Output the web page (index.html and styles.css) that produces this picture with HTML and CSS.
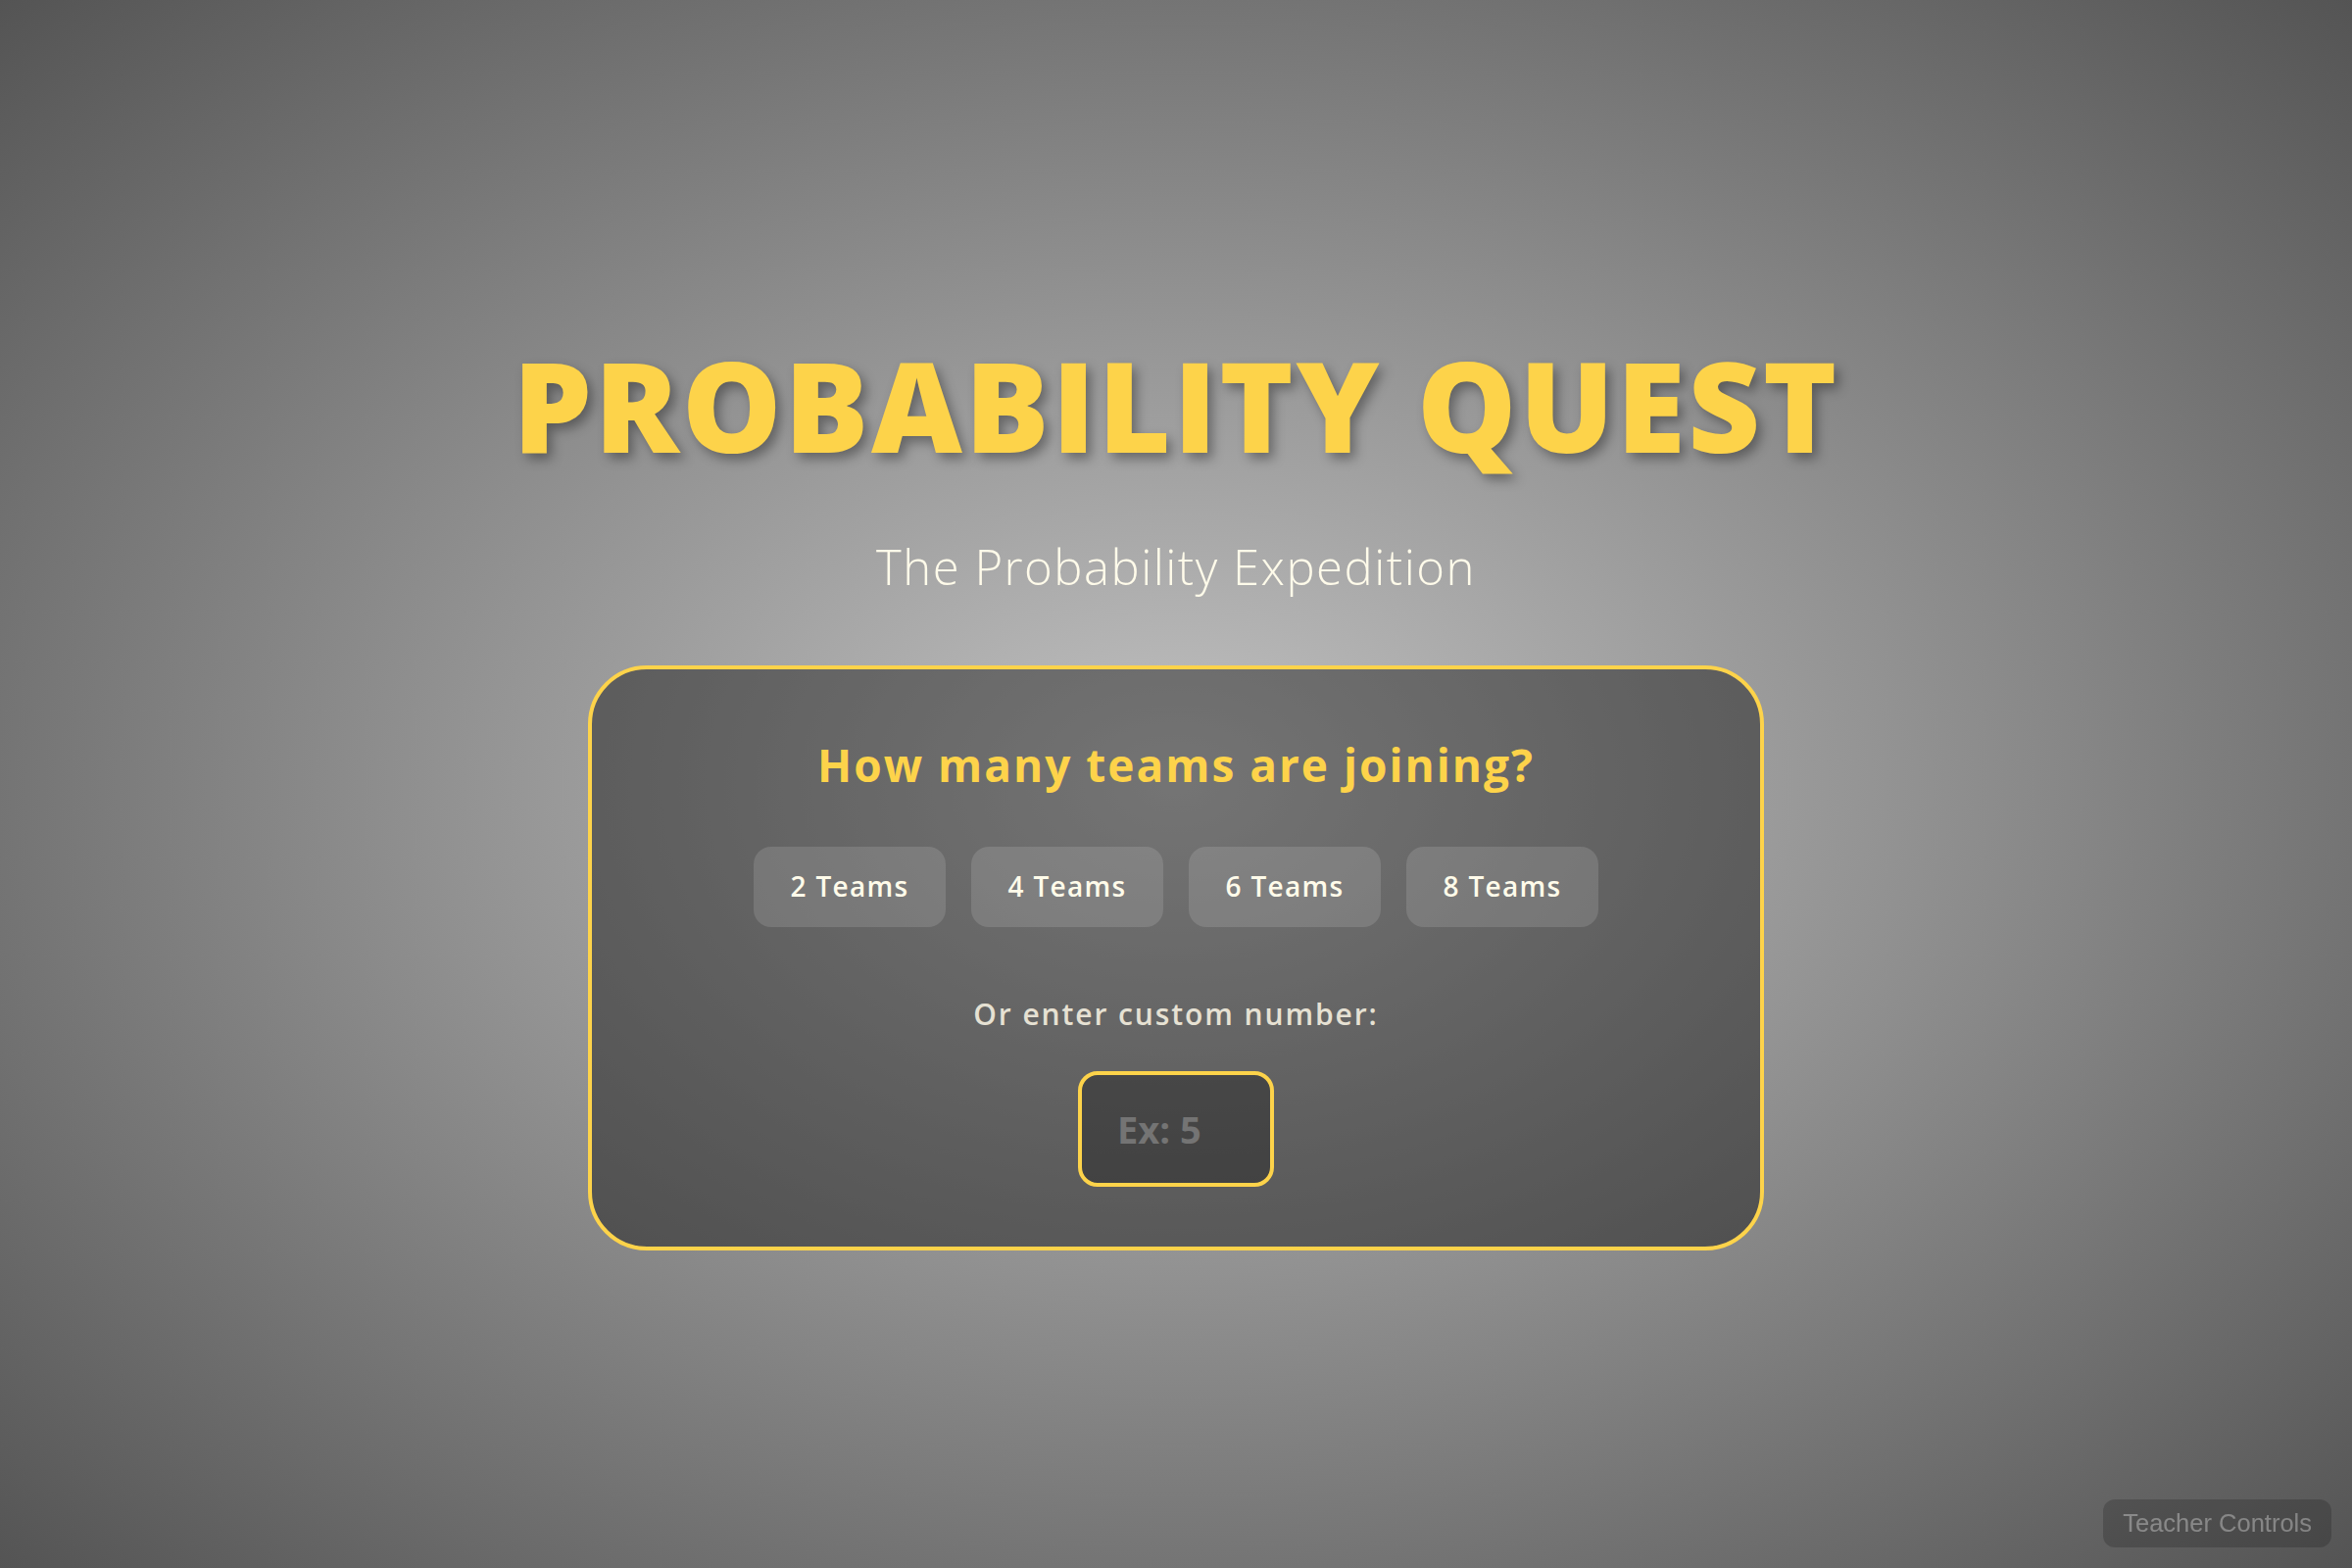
FILE: index.html
```html
<!DOCTYPE html>
<html lang="en">
<head>
<meta charset="utf-8">
<title>Probability Quest</title>
<link rel="stylesheet" href="styles.css">
</head>
<body>
<main class="screen">
  <h1 class="title">PROBABILITY QUEST</h1>
  <p class="subtitle">The Probability Expedition</p>
  <section class="card">
    <h2 class="question">How many teams are joining?</h2>
    <div class="team-options">
      <button class="team-btn">2 Teams</button>
      <button class="team-btn">4 Teams</button>
      <button class="team-btn">6 Teams</button>
      <button class="team-btn">8 Teams</button>
    </div>
    <p class="custom-label">Or enter custom number:</p>
    <input class="custom-input" type="number" placeholder="Ex: 5">
  </section>
</main>
<button class="teacher-btn">Teacher Controls</button>
</body>
</html>
```

FILE: styles.css
```css
* { box-sizing: border-box; }

html, body {
  margin: 0;
  padding: 0;
  height: 100%;
}

body {
  min-height: 100vh;
  font-family: "Open Sans", "Noto Sans", sans-serif;
  background: radial-gradient(ellipse farthest-corner at 50% 50%, #c2c2c2 0%, #545454 100%);
  color: #fff8e6;
  overflow: hidden;
}

.screen {
  min-height: 100vh;
  display: flex;
  flex-direction: column;
  align-items: center;
  justify-content: center;
  padding-top: 12px;
}

.title {
  margin: 0;
  font-family: "Open Sans", sans-serif;
  font-weight: 800;
  font-size: 128px;
  line-height: 1.2;
  letter-spacing: 2.5px;
  color: #fdd34a;
  text-shadow: 5px 6px 12px rgba(0, 0, 0, 0.35);
}

.subtitle {
  margin: 59px 0 0;
  font-weight: 300;
  font-size: 49px;
  line-height: 1.2;
  letter-spacing: 1.5px;
  color: #fffbea;
}

.card {
  margin-top: 71px;
  width: 1200px;
  padding: 70px 40px 61px;
  border: 4.5px solid #fdd34a;
  border-radius: 60px;
  background: rgba(0, 0, 0, 0.4);
  display: flex;
  flex-direction: column;
  align-items: center;
}

.question {
  margin: 0;
  font-weight: 700;
  font-size: 46px;
  line-height: 1.2;
  letter-spacing: 2px;
  color: #fdd34a;
}

.team-options {
  margin-top: 56px;
  display: flex;
  gap: 26px;
}

.team-btn {
  min-width: 196px;
  padding: 24px 30px;
  border: none;
  border-radius: 18px;
  background: rgba(255, 255, 255, 0.13);
  font-family: "Open Sans", sans-serif;
  font-weight: 600;
  font-size: 28px;
  line-height: 1.2;
  letter-spacing: 1.3px;
  color: #fffbea;
}

.custom-label {
  margin: 71px 0 0;
  font-weight: 600;
  font-size: 30px;
  line-height: 1.2;
  letter-spacing: 1.9px;
  color: #e6e1d3;
}

.custom-input {
  margin-top: 40px;
  width: 200px;
  height: 118px;
  padding: 0 20px 0 36px;
  border: 4.5px solid #fdd34a;
  border-radius: 20px;
  background: rgba(0, 0, 0, 0.28);
  font-family: "Open Sans", sans-serif;
  font-weight: 700;
  font-size: 38px;
  color: #fffbea;
  outline: none;
}

.custom-input::placeholder {
  color: #747474;
  opacity: 1;
}

.teacher-btn {
  position: fixed;
  right: 21px;
  bottom: 21px;
  padding: 10px 20px;
  border: none;
  border-radius: 12px;
  background: rgba(0, 0, 0, 0.18);
  font-family: "Liberation Sans", Arial, sans-serif;
  font-size: 25.5px;
  color: rgba(255, 255, 255, 0.33);
}
```
